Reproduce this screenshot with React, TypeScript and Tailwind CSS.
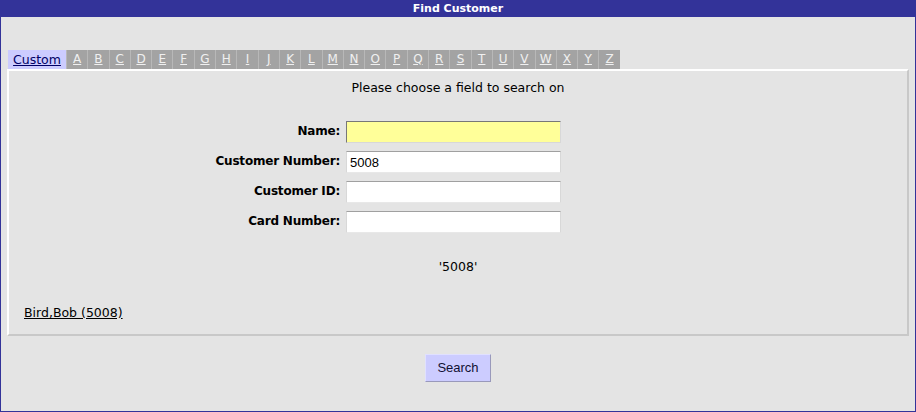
import React from 'react';

const letters = 'ABCDEFGHIJKLMNOPQRSTUVWXYZ'.split('');

const fields = [
  { label: 'Name:', value: '', focus: true },
  { label: 'Customer Number:', value: '5008', focus: false },
  { label: 'Customer ID:', value: '', focus: false },
  { label: 'Card Number:', value: '', focus: false },
];

export default function App() {
  return (
    <div className="w-[916px] h-[412px] bg-[#e4e4e4] border border-t-0 border-[#333399] flex flex-col font-['DejaVu_Sans',sans-serif] text-black">
      {/* title bar */}
      <div className="h-[17px] bg-[#333399] text-white font-bold text-[11px] leading-[17px] text-center">
        Find Customer
      </div>

      {/* tabs */}
      <div className="flex pl-[7px] mt-[33px] h-[19px]">
        <a className="w-[58px] bg-[#ccccff] text-[#000066] underline text-[12.5px] leading-[19px] text-center cursor-pointer">
          Custom
        </a>
        {letters.map((l) => (
          <a
            key={l}
            className="w-[21.3px] bg-[#a3a3a3] border-l border-[#b8b8b8] text-[#f0f0f0] underline text-[12px] leading-[19px] text-center cursor-pointer"
          >
            {l}
          </a>
        ))}
      </div>

      {/* panel */}
      <div className="mx-[6px] h-[267px] border-t-2 border-l-2 border-t-white border-l-white border-r-2 border-b-2 border-r-[#c8c8c8] border-b-[#c8c8c8] flex flex-col">
        <div className="text-center text-[12.5px] mt-[9px] leading-[16px]">Please choose a field to search on</div>

        <div className="flex flex-col gap-[8px] mt-[25px]">
          {fields.map((f) => (
            <div key={f.label} className="flex items-center">
              <label className="w-[337px] pr-[6px] text-right font-bold text-[12px] -mt-[3px] tracking-[-0.2px]">{f.label}</label>
              <input
                defaultValue={f.value}
                className={
                  'w-[215px] h-[22px] px-[3px] text-[13px] font-["Liberation_Sans",sans-serif] outline-none border ' +
                  (f.focus
                    ? 'bg-[#ffff99] border-t-[#777777] border-l-[#777777] border-r-[#d8d8d8] border-b-[#d8d8d8]'
                    : 'bg-white border-t-[#a0a0a0] border-l-[#d8d8d8] border-r-[#d8d8d8] border-b-[#e8e8e8]')
                }
              />
            </div>
          ))}
        </div>

        <div className="text-center text-[12.5px] mt-[26px] leading-[16px]">'5008'</div>

        <a className="ml-[15px] mt-[30px] text-[12.5px] underline cursor-pointer self-start leading-[16px]">Bird,Bob (5008)</a>
      </div>

      {/* search button */}
      <div className="flex justify-center mt-[18px]">
        <button className="w-[66px] h-[28px] bg-[#ccccff] border border-t-[#e0e0ff] border-l-[#e0e0ff] border-r-[#9999bb] border-b-[#9999bb] text-[13px] font-['Liberation_Sans',sans-serif] text-[#111133]">
          Search
        </button>
      </div>
    </div>
  );
}
